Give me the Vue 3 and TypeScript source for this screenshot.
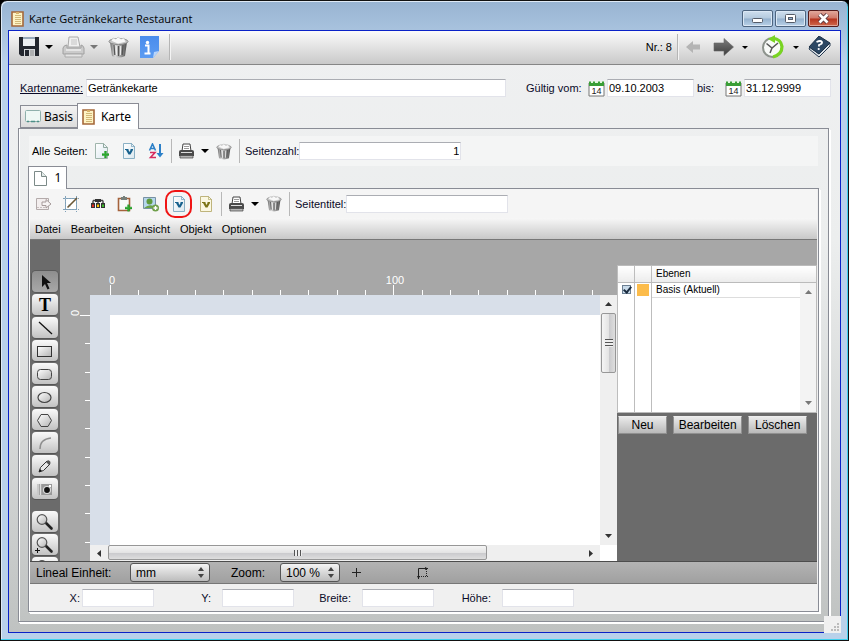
<script setup lang="ts">
import { ref } from 'vue'

const cardName = ref('Getränkekarte')
const validFrom = ref('09.10.2003')
const validTo = ref('31.12.9999')
const pageCount = ref('1')
const pageTitle = ref('')
const unit = ref('mm')
const zoom = ref('100 %')
const layerVisible = ref(true)

const menu = ['Datei', 'Bearbeiten', 'Ansicht', 'Objekt', 'Optionen']

const fields = ref([
  { id: 'pos-x', label: 'X:', value: '', tight: true },
  { id: 'pos-y', label: 'Y:', value: '', tight: false },
  { id: 'pos-w', label: 'Breite:', value: '', tight: false },
  { id: 'pos-h', label: 'Höhe:', value: '', tight: false },
])

const tools = [
  { id: 'select', label: 'Auswahl' },
  { id: 'text', label: 'Text' },
  { id: 'line', label: 'Linie' },
  { id: 'rect', label: 'Rechteck' },
  { id: 'round', label: 'Abgerundetes Rechteck' },
  { id: 'ellipse', label: 'Ellipse' },
  { id: 'polygon', label: 'Polygon' },
  { id: 'arc', label: 'Bogen' },
  { id: 'pencil', label: 'Stift' },
  { id: 'picture', label: 'Bild' },
  { id: 'zoom', label: 'Lupe' },
  { id: 'zoom-in', label: 'Vergrößern' },
  { id: 'zoom-out', label: 'Verkleinern' },
]
const activeTool = ref('select')

// Ruler marks: one every 10 mm, 17 / 6 px per mm
const marks = Array.from({ length: 60 }, (_, i) => Math.round((i * 170) / 6))
const rulerLabels = [0, 10]

const thumbX = 80
const thumbY = 28
</script>

<template>
  <div class="window">
    <svg class="defs" width="0" height="0" aria-hidden="true">
      <defs>
        <linearGradient id="gBin" x1="0" y1="0" x2="1" y2="0">
          <stop offset="0" stop-color="#6a6a6a" /><stop offset=".3" stop-color="#dadada" />
          <stop offset=".65" stop-color="#9a9a9a" /><stop offset="1" stop-color="#4a4a4a" />
        </linearGradient>
        <linearGradient id="gDark" x1="0" y1="0" x2="0" y2="1">
          <stop offset="0" stop-color="#7d7d7d" /><stop offset="1" stop-color="#3c3c3c" />
        </linearGradient>
        <linearGradient id="gInfo" x1="0" y1="0" x2="0" y2="1">
          <stop offset="0" stop-color="#4a8cec" /><stop offset="1" stop-color="#5c9cf2" />
        </linearGradient>
        <linearGradient id="gShape" x1="0" y1="0" x2="1" y2="1">
          <stop offset="0" stop-color="#fff" /><stop offset="1" stop-color="#b4b4b4" />
        </linearGradient>
        <linearGradient id="gPage" x1="0" y1="0" x2="1" y2="1">
          <stop offset="0" stop-color="#fff" /><stop offset="1" stop-color="#dbe8ef" />
        </linearGradient>
        <symbol id="bin" viewBox="0 0 21 22">
          <path d="M2 6h17l-2 14q-6.500 3-13 0z" fill="url(#gBin)" />
          <path d="M6 9l.8 10M10.500 10v10M15 9l-.8 10" stroke="#555" stroke-width="1.200" fill="none" />
          <path d="M8.300 10l.3 9M12.700 10l-.3 9" stroke="#eee" stroke-width="1" fill="none" />
          <ellipse cx="10.500" cy="5.500" rx="9.500" ry="3" fill="#c6c6c6" stroke="#858585" />
          <path d="M3 5l2-3 3 1 2-2 3 2 3-1 2 4-8 2z" fill="#f8f8f8" stroke="#bbb" stroke-width=".6" />
        </symbol>
        <symbol id="printer" viewBox="0 0 17 16">
          <path d="M4 8L5 1h7l1 7z" fill="#fff" stroke="#444" />
          <path d="M6 3.500h5M6 5.500h5" stroke="#999" />
          <path d="M1 8.500q0-1.500 2-1.500h11q2 0 2 1.500V13H1z" fill="#4a4a4a" />
          <path d="M3 9.500h11" stroke="#ddd" />
          <path d="M2 12.500h13V15H2z" fill="#b5b5b5" stroke="#444" stroke-width=".7" />
        </symbol>
        <symbol id="caret" viewBox="0 0 8 4"><path d="M0 0h8L4 4z" /></symbol>
        <symbol id="plus" viewBox="0 0 8 8">
          <path d="M3 0h2v3h3v2H5v3H3V5H0V3h3z" fill="#2fae2f" stroke="#118a1d" stroke-width=".5" />
        </symbol>
        <symbol id="notebook" viewBox="0 0 13 16">
          <path d="M1 1h11v14H1z" fill="#fdf3c4" stroke="#a5683a" stroke-width="1.600" />
          <path d="M4 4.500h6M4 6.500h6M4 8.500h6M4 10.500h6M4 12.500h6" stroke="#d2b878" />
          <path d="M5 1v2h3V1" fill="#d8b26a" />
        </symbol>
        <symbol id="variable" viewBox="0 0 16 16">
          <path d="M10.500.5v3h3" fill="none" stroke="currentColor" stroke-opacity=".4" />
          <path d="M4 6h3.500v1l1 2 1-2V6H12v1l-2.500 4.500h-2L5 7H4z" fill="currentColor" />
        </symbol>
        <symbol id="calendar" viewBox="0 0 17 17">
          <path d="M1 3h15v13H1z" fill="#fff" stroke="#777" />
          <path d="M1 1.500h15V6H1z" fill="#3a9e36" />
          <path d="M3 1h2v2H3zM7 1h3v2H7zM12 1h2v2h-2z" fill="#e4f4e0" />
        </symbol>
        <symbol id="lens" viewBox="0 0 20 18">
          <path d="M10.500 9.500l6 6" stroke="#222" stroke-width="2.600" stroke-linecap="round" />
          <circle cx="7" cy="6.500" r="4.800" fill="url(#gShape)" stroke="#555" stroke-width="1.200" />
        </symbol>
        <symbol id="updown" viewBox="0 0 6 11">
          <path d="M0 4l3-4 3 4zM0 7h6l-3 4z" fill="#444" />
        </symbol>
      </defs>
    </svg>

    <header class="titlebar">
      <svg class="app-icon" width="13" height="16"><use href="#notebook" /></svg>
      <h1>Karte Getränkekarte Restaurant</h1>
      <div class="winbtns">
        <button type="button" aria-label="Minimieren">
          <svg width="13" height="11"><rect x="1.500" y="5.500" width="10" height="4" rx="1" fill="#fff" stroke="#555c68" /></svg>
        </button>
        <button type="button" aria-label="Maximieren">
          <svg width="13" height="11"><rect x="1.500" y="1.500" width="10" height="8" rx="1" fill="#fff" stroke="#555c68" /><rect x="4.500" y="4.500" width="4" height="2" fill="#8fb0d2" stroke="#555c68" /></svg>
        </button>
        <button type="button" class="close" aria-label="Schließen">
          <svg width="13" height="11"><path d="M2.500 1.500l8 8M10.500 1.500l-8 8" stroke="#5b3a3f" stroke-width="4.500" /><path d="M2.500 1.500l8 8M10.500 1.500l-8 8" stroke="#fff" stroke-width="2.700" /></svg>
        </button>
      </div>
    </header>

    <main class="client">
      <div class="mainbar">
        <div class="split">
          <button type="button" aria-label="Speichern">
            <svg width="21" height="22" viewBox="0 0 21 22">
              <path d="M0 1h20v19H2l-2-2z" fill="#23272f" />
              <path d="M4 1h12v9H4z" fill="#eceff2" /><path d="M4 1h12v2H4z" fill="#9ab" />
              <path d="M5 13h11v7H5z" fill="#d4d7da" /><path d="M6 14h4v6H6z" fill="#23272f" />
              <path d="M12 14v6M14 14v6" stroke="#888" />
            </svg>
          </button>
          <button type="button" class="drop" aria-label="Speichern-Optionen"><svg width="8" height="4"><use href="#caret" /></svg></button>
        </div>
        <div class="split off">
          <button type="button" aria-label="Drucken">
            <svg width="23" height="22" viewBox="0 0 23 22">
              <path d="M6 11L7 1h9l2 10z" fill="#f0f0f0" stroke="#aaa" />
              <path d="M9 4h6M9 6h6M9 8h6" stroke="#c4c4c4" />
              <path d="M1 12q1-3 4-3v3h14V9q2 0 3 3v6H1z" fill="#cbcbcb" stroke="#a0a0a0" />
              <path d="M4 14h15" stroke="#fff" /><path d="M3 18h17v3H3z" fill="#e4e4e4" stroke="#aaa" />
            </svg>
          </button>
          <button type="button" class="drop" aria-label="Druckoptionen"><svg width="8" height="4"><use href="#caret" /></svg></button>
        </div>
        <button type="button" class="wide" aria-label="Löschen"><svg width="21" height="22"><use href="#bin" /></svg></button>
        <button type="button" aria-label="Information">
          <svg width="21" height="22" viewBox="0 0 21 22">
            <path d="M1 0h19v15l-6 7H1z" fill="url(#gInfo)" />
            <path d="M14 22l1-6 5-1z" fill="#b9d5fa" />
            <circle cx="8.500" cy="6.500" r="1.700" fill="#fff" />
            <path d="M6 9.500h3.500V17M5.500 17.500h6" stroke="#fff" stroke-width="2" fill="none" />
          </svg>
        </button>
        <span class="rule"></span>
        <span class="number">Nr.: 8</span>
        <span class="rule"></span>
        <button type="button" class="prev" aria-label="Zurück">
          <svg width="15" height="14" viewBox="0 0 15 14"><path d="M0 7l7-6v3.500h7v5H7V13z" fill="#b4b4b4" /></svg>
        </button>
        <div class="split">
          <button type="button" aria-label="Weiter">
            <svg width="21" height="18" viewBox="0 0 21 18"><path d="M1 5h10V.5L20.500 9 11 17.500V13H1z" fill="url(#gDark)" stroke="#666" stroke-width=".6" /></svg>
          </button>
          <button type="button" class="drop right" aria-label="Weitere"><svg width="6" height="3"><use href="#caret" /></svg></button>
        </div>
        <div class="split">
          <button type="button" aria-label="Verlauf">
            <svg width="24" height="24" viewBox="0 0 24 24">
              <circle cx="11.500" cy="12.500" r="9.500" fill="#f8faf8" stroke="#8d938d" stroke-width="2" />
              <path d="M12 3.500q8 .5 9 8 0 8-9 10.500" fill="none" stroke="#79d422" stroke-width="3.200" />
              <path d="M14 0v8L7 4z" fill="#79d422" />
              <path d="M5.500 8.500l5.500 4.500 6-5M11 13l-2 5" stroke="#555" stroke-width="1.500" fill="none" />
            </svg>
          </button>
          <button type="button" class="drop right" aria-label="Verlaufsliste"><svg width="6" height="3"><use href="#caret" /></svg></button>
        </div>
        <button type="button" class="help" aria-label="Hilfe">
          <svg width="23" height="22" viewBox="0 0 23 22">
            <path d="M1 13l10 8 11-11v-3L11 18 2 11z" fill="#dfe5ea" stroke="#24384f" />
            <path d="M1 11L11 0l11 7-11 11z" fill="#2c4763" stroke="#1d3147" />
            <path d="M8.500 6q4-2 5.500 0 .5 2-3 3v1.500" stroke="#fff" stroke-width="1.800" fill="none" />
            <circle cx="10.700" cy="13" r="1.100" fill="#fff" />
          </svg>
        </button>
      </div>

      <div class="cardrow">
        <label class="name" for="card-name">Kartenname:</label>
        <input id="card-name" v-model="cardName" class="grow" type="text" />
        <label class="from" for="valid-from">Gültig vom:</label>
        <button type="button" class="cal" aria-label="Kalender: gültig vom">
          <svg width="17" height="17"><use href="#calendar" /><text x="8.500" y="14" text-anchor="middle">14</text></svg>
        </button>
        <input id="valid-from" v-model="validFrom" class="date" type="text" />
        <label class="to" for="valid-to">bis:</label>
        <button type="button" class="cal" aria-label="Kalender: gültig bis">
          <svg width="17" height="17"><use href="#calendar" /><text x="8.500" y="14" text-anchor="middle">14</text></svg>
        </button>
        <input id="valid-to" v-model="validTo" class="date" type="text" />
      </div>

      <nav class="tabs">
        <button type="button" class="tab">
          <svg width="17" height="15" viewBox="0 0 17 15">
            <rect x=".5" y="1.500" width="15" height="11" rx="1" fill="#eef8f5" stroke="#8fb0ac" />
            <path d="M2 12.500h2M6 12.500h4M12 12.500h2" stroke="#4d8f88" stroke-width="1.500" />
          </svg>
          Basis
        </button>
        <button type="button" class="tab current">
          <svg width="13" height="16"><use href="#notebook" /></svg>
          Karte
        </button>
      </nav>

      <section class="panel outer">
        <div class="bar">
          <span class="caption">Alle Seiten:</span>
          <button type="button" class="ico" aria-label="Neue Seite">
            <svg width="16" height="16" viewBox="0 0 16 16"><path d="M1.500.5h8l4 4v11h-12z" fill="url(#gPage)" stroke="#9fb5ac" /><path d="M9.500.5v4h4" fill="none" stroke="#8fa99f" /><use href="#plus" x="8" y="8" width="7" height="7" /></svg>
          </button>
          <button type="button" class="ico blue" aria-label="Variable">
            <svg width="16" height="16" viewBox="0 0 16 16"><path d="M2.500.5h8l3 3v12h-11z" fill="url(#gPage)" stroke="#8ab0c4" /><use href="#variable" /></svg>
          </button>
          <button type="button" class="ico" aria-label="Sortieren">
            <svg width="16" height="16" viewBox="0 0 16 16"><path d="M1.500 7.500L4.500 1l3 6.500M2.500 5.500h4" stroke="#2c80c8" stroke-width="1.600" fill="none" /><path d="M2 9.500h5L2.500 14.500H8" stroke="#d62c5e" stroke-width="1.600" fill="none" /><path d="M12 1v10" stroke="#2c80c8" stroke-width="2" /><path d="M8.500 10h7L12 14.500z" fill="#2c80c8" /></svg>
          </button>
          <span class="sep"></span>
          <button type="button" class="ico" aria-label="Alle drucken"><svg width="17" height="16"><use href="#printer" /></svg></button>
          <button type="button" class="mini" aria-label="Druckoptionen"><svg width="8" height="4"><use href="#caret" /></svg></button>
          <button type="button" class="ico" aria-label="Alle löschen"><svg width="16" height="17"><use href="#bin" /></svg></button>
          <span class="sep"></span>
          <label class="lbl" for="page-count">Seitenzahl:</label>
          <input id="page-count" v-model="pageCount" class="mid num" type="text" />
        </div>

        <button type="button" class="pagetab">
          <svg width="13" height="15" viewBox="0 0 13 15"><path d="M.5.5h7l5 5v9H.5z" fill="#fff" stroke="#7c8a88" /><path d="M7.500.5v5h5" fill="#e3ebe9" stroke="#7c8a88" /></svg>
          1
        </button>

        <div class="panel inner">
          <div class="bar second">
            <button type="button" class="ico" aria-label="Exportieren">
              <svg width="17" height="16" viewBox="0 0 17 16"><path d="M1.500 2.500h12v11h-12z" fill="#f3eeee" stroke="#b3aaaa" /><path d="M2 11h2v1H2zM5 11h2v1H5zM8 11h2v1H8z" fill="#c8bfbf" /><path d="M7 6h4V3.500L16 8l-5 4V9.500H7z" fill="#f7f3f3" stroke="#a69a9a" /></svg>
            </button>
            <button type="button" class="ico" aria-label="Bereich bearbeiten">
              <svg width="16" height="16" viewBox="0 0 16 16"><path d="M2.500 2.500h11v11h-11z" fill="#fff" stroke="#8aa8bf" /><path d="M5 8h3v3H5z" fill="#dfeaf2" /><path d="M0 2.500h16M0 13.500h16M2.500 0v16M13.500 0v16" stroke="#7fa0b8" stroke-dasharray="2 1" /><path d="M4.500 11.500L14 2" stroke="#6b5836" stroke-width="1.600" /></svg>
            </button>
            <button type="button" class="ico" aria-label="Struktur">
              <svg width="16" height="16" viewBox="0 0 16 16"><path d="M3 4.500h10M3 4.500V8M8 4.500V8M13 4.500V8" stroke="#444" stroke-width="1.400" fill="none" /><path d="M5 3h6v3H5z" fill="#333" /><path d="M1 7h4v5H1zM6 7h4v5H6zM11 7h4v5h-4z" fill="#333" /><path d="M2 8.500h2v2.500H2z" fill="#e02a20" /><path d="M7 8.500h2v2.500H7z" fill="#ffc400" /><path d="M12 8.500h2v2.500h-2z" fill="#3dbb2a" /></svg>
            </button>
            <button type="button" class="ico" aria-label="Einfügen">
              <svg width="16" height="16" viewBox="0 0 16 16"><path d="M1.500 2.500h11v12h-11z" fill="#f8faf8" stroke="#a5633d" stroke-width="1.600" /><path d="M4 1h6v3H4z" fill="#77807a" /><path d="M6 0h2v2H6z" fill="#77807a" /><use href="#plus" x="8" y="8.500" width="7" height="7" /></svg>
            </button>
            <button type="button" class="ico" aria-label="Bild hinzufügen">
              <svg width="17" height="16" viewBox="0 0 17 16"><path d="M.5 1.500h12v11H.5z" fill="#b5d6ec" stroke="#7791a3" /><circle cx="6.500" cy="5.500" r="3" fill="#5e9a3d" /><path d="M1 12q6-5 11-1v1z" fill="#6aa347" /><circle cx="12.500" cy="12" r="3.500" fill="#6f9f4a" /><path d="M12.500 10v4M10.500 12h4" stroke="#fff" stroke-width="1.400" /></svg>
            </button>
            <button type="button" class="ico blue marked" aria-label="Variable">
              <svg width="16" height="16" viewBox="0 0 16 16"><path d="M2.500.5h8l3 3v12h-11z" fill="url(#gPage)" stroke="#8ab0c4" /><use href="#variable" /></svg>
            </button>
            <button type="button" class="ico olive" aria-label="Artikelvariable">
              <svg width="16" height="16" viewBox="0 0 16 16"><path d="M2.500.5h8l3 3v12h-11z" fill="#fbf8e2" stroke="#bfb47c" /><use href="#variable" /></svg>
            </button>
            <span class="sep"></span>
            <button type="button" class="ico" aria-label="Seite drucken"><svg width="17" height="16"><use href="#printer" /></svg></button>
            <button type="button" class="mini" aria-label="Druckoptionen"><svg width="8" height="4"><use href="#caret" /></svg></button>
            <button type="button" class="ico" aria-label="Seite löschen"><svg width="16" height="17"><use href="#bin" /></svg></button>
            <span class="sep"></span>
            <label class="lbl" for="page-title">Seitentitel:</label>
            <input id="page-title" v-model="pageTitle" class="mid" type="text" />
          </div>

          <div class="designer">
            <nav class="menu">
              <button v-for="m in menu" :key="m" type="button">{{ m }}</button>
            </nav>

            <div class="editor">
              <div class="tools">
                <button
                  v-for="t in tools"
                  :key="t.id"
                  type="button"
                  class="tool"
                  :class="{ active: t.id === activeTool, spaced: t.id === 'zoom' }"
                  :aria-label="t.label"
                  @click="activeTool = t.id"
                >
                  <span v-if="t.id === 'text'" class="glyph">T</span>
                  <svg v-else width="20" height="18" viewBox="0 0 20 18">
                    <path v-if="t.id === 'select'" d="M7 2v12l3-3 2.500 5.500 2-1L12 10h4z" fill="#111" />
                    <path v-if="t.id === 'line'" d="M4 3l13 12" stroke="#111" stroke-width="1.300" />
                    <rect v-if="t.id === 'rect'" x="2.500" y="4.500" width="14" height="10" fill="url(#gShape)" stroke="#333" />
                    <rect v-if="t.id === 'round'" x="2.500" y="4.500" width="14" height="10" rx="3" fill="url(#gShape)" stroke="#444" />
                    <ellipse v-if="t.id === 'ellipse'" cx="9.500" cy="9.500" rx="6.500" ry="5" fill="url(#gShape)" stroke="#444" stroke-width="1.200" />
                    <path v-if="t.id === 'polygon'" d="M6 3.500h7l3.500 6-3.500 6H6l-3.500-6z" fill="url(#gShape)" stroke="#444" />
                    <path v-if="t.id === 'arc'" d="M5 15Q5 5 16 4" fill="none" stroke="#8e8e8e" stroke-width="1.500" />
                    <g v-if="t.id === 'pencil'">
                      <path d="M4 15l1.500-4.500L12 4l3 3-6.500 6.500z" fill="#e8e8e8" stroke="#333" />
                      <path d="M11 5l3 3 1.500-1.500q.5-2-1.500-3-1-.5-1.500 0z" fill="#555" /><path d="M4 15l3-1-2-2z" fill="#111" />
                    </g>
                    <g v-if="t.id === 'picture'">
                      <path d="M2 4h15v11H2z" fill="#999" /><path d="M3 4v11M5.500 4v11" stroke="#ddd" stroke-width="1.400" />
                      <circle cx="12" cy="10" r="4" fill="#ddd" /><circle cx="12" cy="10" r="2.900" fill="#111" /><path d="M14 5h2v2h-2z" fill="#fff" />
                    </g>
                    <use v-if="t.id.startsWith('zoom')" href="#lens" />
                    <path v-if="t.id === 'zoom-in'" d="M0 14.500h5M2.500 12v5" stroke="#111" />
                  </svg>
                </button>
              </div>

              <div class="stage">
                <svg class="ruler-top" height="55" aria-hidden="true">
                  <rect v-for="(m, i) in marks" :key="i" :x="50 + m" :y="i % 10 === 0 ? 45 : 50" width="1" :height="i % 10 === 0 ? 10 : 5" fill="#fff" />
                  <text v-for="n in rulerLabels" :key="n" :x="52 + marks[n]" y="44" text-anchor="middle">{{ n * 10 }}</text>
                </svg>
                <svg class="ruler-left" width="30" aria-hidden="true">
                  <rect v-for="(m, i) in marks" :key="i" :x="i % 10 === 0 ? 20 : 25" :y="20 + m" :width="i % 10 === 0 ? 10 : 5" height="1" fill="#fff" />
                  <text x="19" y="21" transform="rotate(-90 19 21)">0</text>
                </svg>
                <div class="view">
                  <div class="desk"><div class="paper"></div></div>
                  <div class="scroll vert">
                    <button type="button" class="arrow" aria-label="Nach oben"><svg width="7" height="4"><path d="M0 4l3.500-4L7 4z" fill="#333" /></svg></button>
                    <div class="track"><div class="thumb" :style="{ height: thumbY + '%' }"><i></i></div></div>
                    <button type="button" class="arrow" aria-label="Nach unten"><svg width="7" height="4"><path d="M0 0h7L3.500 4z" fill="#333" /></svg></button>
                  </div>
                  <div class="scroll horz">
                    <button type="button" class="arrow" aria-label="Nach links"><svg width="4" height="7"><path d="M4 0v7L0 3.500z" fill="#333" /></svg></button>
                    <div class="track"><div class="thumb" :style="{ width: thumbX + '%' }"><i></i></div></div>
                    <button type="button" class="arrow" aria-label="Nach rechts"><svg width="4" height="7"><path d="M0 0v7l4-3.500z" fill="#333" /></svg></button>
                  </div>
                </div>
              </div>

              <aside class="layers">
                <div class="layerbox">
                  <table>
                    <thead>
                      <tr><th class="c1"></th><th class="c1"></th><th>Ebenen</th></tr>
                    </thead>
                    <tbody>
                      <tr class="row">
                        <td><input v-model="layerVisible" type="checkbox" aria-label="Basis sichtbar" /></td>
                        <td><span class="swatch"></span></td>
                        <td class="label">Basis (Aktuell)</td>
                      </tr>
                      <tr class="rest"><td></td><td></td><td></td></tr>
                    </tbody>
                  </table>
                  <div class="sidebar">
                    <svg width="7" height="4"><path d="M0 4l3.500-4L7 4z" fill="#777" /></svg>
                    <svg width="7" height="4"><path d="M0 0h7L3.500 4z" fill="#777" /></svg>
                  </div>
                </div>
                <div class="layerbtns">
                  <button type="button" class="new">Neu</button>
                  <button type="button" class="edit">Bearbeiten</button>
                  <button type="button" class="del">Löschen</button>
                </div>
              </aside>
            </div>

            <div class="status">
              <label class="unit-label" for="unit">Lineal Einheit:</label>
              <span class="pick wide-pick">
                <select id="unit" v-model="unit"><option>mm</option><option>cm</option></select>
                <svg width="6" height="11"><use href="#updown" /></svg>
              </span>
              <label class="zoom-label" for="zoom">Zoom:</label>
              <span class="pick">
                <select id="zoom" v-model="zoom"><option>100 %</option><option>200 %</option></select>
                <svg width="6" height="11"><use href="#updown" /></svg>
              </span>
              <svg class="cross" width="11" height="11"><path d="M5.500 1v9M1 5.500h9" stroke="#222" /></svg>
              <svg class="size" width="12" height="12" viewBox="0 0 12 12">
                <path d="M2.500 12V1.500H12" stroke="#222" fill="none" /><path d="M10.500 2v8M3 9.500h9" stroke="#222" stroke-dasharray="1 1" />
                <path d="M9 0l3 1.500L9 3zM1 9l1.500 3L4 9z" fill="#222" />
              </svg>
            </div>
          </div>

          <div class="coords">
            <div v-for="f in fields" :key="f.id" class="coord" :class="{ tight: f.tight }">
              <label :for="f.id">{{ f.label }}</label>
              <input :id="f.id" v-model="f.value" type="text" />
            </div>
          </div>
        </div>
      </section>

      <svg class="grip" width="17" height="17" aria-hidden="true">
        <path d="M13 7h2v2h-2zM10 10h2v2h-2zM13 10h2v2h-2zM7 13h2v2H7zM10 13h2v2h-2zM13 13h2v2h-2z" fill="#bbb" />
      </svg>
    </main>
  </div>
</template>

<style>
html,
body,
#app {
  height: 100%;
  margin: 0;
}
body {
  background: #000;
}
</style>

<style scoped>
* {
  box-sizing: border-box;
}
.window {
  display: flex;
  flex-direction: column;
  height: 100%;
  padding: 0 7px 7px;
  border: 1px solid #111;
  border-radius: 7px 7px 0 0;
  background: linear-gradient(#98b4d2 0, #b9d1ea 60px, #b9d1ea 100%);
  box-shadow: inset -1px -1px 0 #3fd0ee, inset 1px 1px 0 #dfeaf6;
  font: 11px/14px 'Liberation Sans', Arial, sans-serif;
  color: #000;
}
.defs {
  position: absolute;
}
svg {
  display: block;
  flex: none;
}
button {
  display: flex;
  align-items: center;
  justify-content: center;
  margin: 0;
  padding: 0;
  border: 0;
  background: none;
  font: inherit;
  color: inherit;
}
input[type='text'] {
  height: 18px;
  min-width: 0;
  margin: 0;
  padding: 0 1px;
  border: 1px solid #e2e3ea;
  border-top-color: #abadb3;
  background: #fff;
  font: inherit;
  color: inherit;
}
label {
  white-space: nowrap;
  color: #0a0a28;
}

.titlebar {
  display: flex;
  flex: none;
  align-items: center;
  height: 29px;
  padding: 6px 2px 0 3px;
}
.titlebar h1 {
  flex: 1;
  margin: 0 0 0 5px;
  font: 11px/16px 'Open Sans', 'Noto Sans', sans-serif;
}
.winbtns {
  display: flex;
  gap: 2px;
}
.winbtns button {
  width: 31px;
  height: 17px;
  border: 1px solid #4d6580;
  border-radius: 2px;
  background: linear-gradient(#cfdfee 0, #b4cade 48%, #93b0cd 52%, #b9d2e8 100%);
  box-shadow: inset 0 0 0 1px #dbe8f5;
}
.winbtns .close {
  border-color: #541c1c;
  background: linear-gradient(#e1a89c 0, #d07868 48%, #b5331d 52%, #d0694c 100%);
  box-shadow: inset 0 0 0 1px #e0a698;
}

.client {
  position: relative;
  display: flex;
  flex: 1;
  flex-direction: column;
  min-height: 0;
  border: 1px solid #0a22c8;
  background: linear-gradient(#eff0f1 0, #eceeee 35%, #bfc2c1 100%);
}
.mainbar {
  display: flex;
  flex: none;
  align-items: center;
  gap: 9px;
  height: 34px;
  padding: 0 9px 1px 10px;
  border-bottom: 1px solid #868686;
  background: linear-gradient(#fbfbfb, #c9c9c9);
}
.split {
  display: flex;
  align-items: center;
  gap: 4px;
}
.drop {
  width: 9px;
  height: 22px;
}
.drop.right {
  width: 14px;
}
.off {
  fill: #777;
}
.wide {
  width: 23px;
}
.rule {
  width: 2px;
  height: 26px;
  border-left: 1px solid #b5b5b5;
  background: #f4f4f4;
}
.number {
  margin-right: -4px;
  margin-left: auto;
}
.prev {
  width: 17px;
  margin-right: 2px;
  margin-left: -3px;
}
.help {
  margin-left: -4px;
}

.cardrow {
  display: flex;
  flex: none;
  align-items: center;
  padding: 14px 9px 6px 11px;
}
.name {
  width: 66px;
  text-decoration: underline;
}
.grow {
  flex: 1;
}
.from {
  width: 82px;
  padding-left: 20px;
}
.cal {
  margin-right: 2px;
}
.cal text {
  font: 9px 'Liberation Sans', sans-serif;
  fill: #222;
}
.date {
  width: 87px;
}
.to {
  width: 31px;
  padding-left: 3px;
}

.tabs {
  display: flex;
  flex: none;
  align-items: flex-end;
  position: relative;
  z-index: 1;
  height: 26px;
  margin: 0 0 -1px 11px;
}
.tab {
  gap: 2px;
  height: 23px;
  width: 57px;
  margin-bottom: 1px;
  border: 1px solid #8a8c95;
  border-right: 0;
  background: linear-gradient(#f3f3f3, #dcdcdc);
  font: 12px/16px 'Noto Sans', sans-serif;
}
.tab.current {
  gap: 6px;
  width: 62px;
  height: 26px;
  margin: 0;
  padding-right: 3px;
  border-right: 1px solid #8a8c95;
  border-bottom: 0;
  background: #fff;
}

.panel {
  display: flex;
  flex: 1;
  flex-direction: column;
  min-height: 0;
  border: 1px solid #898c95;
  box-shadow: 1px 1px 0 #fff, 2px 2px 0 #fff, inset 1px 0 0 #fff;
}
.outer {
  margin: 0 11px 10px 9px;
  padding: 7px 9px 9px;
}
.inner {
  background: #f0f0f0;
}
.bar {
  display: flex;
  flex: none;
  align-items: center;
  height: 30px;
  margin: 0 1px;
  background: #f4f5f5;
}
.second {
  height: 29px;
  background: #f5f5f5;
}
.caption {
  width: 59px;
  padding-left: 3px;
  white-space: nowrap;
}
.ico {
  flex: none;
  width: 27px;
  height: 28px;
}
.blue {
  color: #17618d;
}
.olive {
  color: #7d7518;
}
.marked {
  border: 2px solid #f01414;
  border-radius: 10px;
}
.mini {
  width: 10px;
  height: 24px;
}
.sep {
  width: 1px;
  height: 24px;
  margin: 0 1px 0 2px;
  background: #b8b8b8;
}
.lbl {
  padding-left: 4px;
}
.mid {
  width: 162px;
}
.num {
  text-align: right;
}
.pagetab {
  position: relative;
  z-index: 1;
  flex: none;
  gap: 8px;
  width: 39px;
  height: 23px;
  margin-bottom: -1px;
  border: 1px solid #898c95;
  border-bottom: 0;
  background: #fff;
  font: 12px/16px 'Noto Sans', sans-serif;
}

.designer {
  display: flex;
  flex: 1;
  flex-direction: column;
  min-height: 0;
  margin: 0 1px;
}
.menu {
  display: flex;
  flex: none;
  align-items: center;
  gap: 10px;
  height: 22px;
  padding-left: 5px;
  border-bottom: 1px solid #777;
  background: linear-gradient(#f7f7f7, #c8c8c8);
}
.editor {
  display: grid;
  flex: 1;
  grid-template-columns: 30px minmax(0, 1fr) 200px;
  grid-template-rows: minmax(0, 1fr);
  min-height: 0;
}
.tools {
  display: flex;
  flex-direction: column;
  gap: 2px;
  padding: 31px 2px 0;
  overflow: hidden;
  background: #6b6b6b;
}
.tool {
  flex: none;
  height: 21px;
  border-radius: 4px;
  background: linear-gradient(#fafafa, #c2c2c2);
  box-shadow: 0 1px 0 #555;
}
.tool.active {
  background: linear-gradient(#8e8e8e, #a8a8a8);
  box-shadow: 0 0 0 1px #5a5a5a;
}
.tool.spaced {
  margin-top: 10px;
}
.glyph {
  font: bold 18px/20px 'Liberation Serif', serif;
}

.stage {
  display: grid;
  grid-template-columns: 30px minmax(0, 1fr);
  grid-template-rows: 55px minmax(0, 1fr);
  background: #a7a7a7;
}
.ruler-top {
  grid-column: 1 / 3;
  width: 100%;
}
.ruler-left {
  height: 100%;
  overflow: hidden;
}
.stage text {
  font: 11px 'Liberation Sans', sans-serif;
  fill: #fff;
}
.view {
  display: grid;
  grid-template-columns: minmax(0, 1fr) 17px;
  grid-template-rows: minmax(0, 1fr) 16px;
  background: #fff;
}
.desk {
  padding: 20px 0 0 20px;
  background: #d8dfe9;
}
.paper {
  height: 100%;
  background: #fff;
}
.scroll {
  display: flex;
  background: #efefef;
}
.vert {
  flex-direction: column;
  padding: 0 1px;
}
.track {
  flex: 1;
}
.arrow {
  width: 18px;
  flex: none;
}
.vert .arrow {
  width: 15px;
  height: 18px;
}
.thumb {
  display: flex;
  align-items: center;
  justify-content: center;
  border: 1px solid #979797;
  border-radius: 2px;
}
.vert .thumb {
  background: linear-gradient(90deg, #f5f5f5, #e4e4e4 50%, #c9c9cc 52%, #dedede);
}
.horz .thumb {
  height: 15px;
  background: linear-gradient(#f5f5f5, #e4e4e4 50%, #c9c9cc 52%, #dedede);
}
.thumb i {
  width: 8px;
  height: 8px;
  background: repeating-linear-gradient(#555 0, #555 1px, #eee 1px, #eee 3px);
}
.horz .thumb i {
  height: 6px;
  background: repeating-linear-gradient(90deg, #555 0, #555 1px, #eee 1px, #eee 3px);
}

.layers {
  background: linear-gradient(#a7a7a7 0, #a7a7a7 25px, #6b6b6b 25px, #6b6b6b 100%);
  padding-top: 25px;
}
.layerbox {
  position: relative;
  height: 148px;
  border: 1px solid #bbb;
  border-width: 1px 1px 1px 0;
  background: #fff;
}
table {
  width: 100%;
  height: 100%;
  border-collapse: collapse;
  table-layout: fixed;
  font: 10px/12px 'Liberation Sans', Arial, sans-serif;
}
th,
td {
  padding: 0;
  border-right: 1px solid #bdbdbd;
  border-left: 1px solid #bdbdbd;
}
th {
  height: 16px;
  border-bottom: 1px solid #bbb;
  background: linear-gradient(#fff, #ececec);
  font-weight: normal;
  text-align: left;
}
th:last-child,
td:last-child {
  padding-left: 4px;
  border-right: 0;
}
.c1 {
  width: 17px;
}
.row td {
  height: 15px;
}
.row .label {
  border-bottom: 1px solid #ddd;
}
.row input {
  display: block;
  appearance: none;
  width: 9px;
  height: 9px;
  margin: 0 auto;
  border: 1px solid #6c7f92;
  background: #c9dbea;
}
.row input:checked::after {
  content: '';
  display: block;
  width: 3px;
  height: 6px;
  margin: -1px 0 0 2px;
  border: solid #1c2d40;
  border-width: 0 2px 2px 0;
  transform: rotate(40deg);
}
.swatch {
  display: block;
  width: 12px;
  height: 12px;
  margin: 0 auto;
  background: #fcbc4b;
}
.sidebar {
  position: absolute;
  top: 17px;
  right: 0;
  bottom: 0;
  display: flex;
  flex-direction: column;
  align-items: center;
  justify-content: space-between;
  width: 16px;
  padding: 7px 0;
  background: #f3f3f3;
}
.layerbtns {
  display: flex;
  gap: 6px;
  padding: 3px 10px 0 1px;
}
.layerbtns button {
  height: 18px;
  border: 1px solid #909090;
  border-top-color: #eee;
  background: linear-gradient(#eaeaea, #b9b9b9);
  font-size: 12px;
}
.new {
  flex: 49;
}
.edit {
  flex: 70;
}
.del {
  flex: 59;
}

.status {
  display: flex;
  flex: none;
  align-items: center;
  height: 23px;
  padding-left: 6px;
  border-top: 1px solid #4c4c4c;
  border-bottom: 1px solid #777;
  background: linear-gradient(#b3b3b3, #a0a0a0);
  font-size: 12px;
}
.status label {
  color: #000;
}
.unit-label {
  width: 94px;
}
.zoom-label {
  width: 70px;
  padding-left: 21px;
}
.pick {
  position: relative;
  width: 60px;
}
.wide-pick {
  width: 80px;
}
.pick select {
  display: block;
  appearance: none;
  width: 100%;
  height: 19px;
  margin: 0;
  padding: 0 5px;
  border: 1px solid #555;
  border-radius: 3px;
  background: linear-gradient(#f4f4f4, #bcbcbc);
  font: inherit;
  color: #000;
}
.pick svg {
  position: absolute;
  top: 4px;
  right: 6px;
  pointer-events: none;
}
.cross {
  margin-left: 11px;
}
.size {
  margin-left: 54px;
}

.coords {
  display: flex;
  flex: none;
  height: 27px;
  align-items: center;
  padding-left: 1px;
}
.coord {
  display: flex;
  align-items: center;
  justify-content: flex-end;
  gap: 11px;
  width: 140px;
}
.coord:first-child {
  width: 124px;
}
.coord.tight {
  gap: 2px;
}
.coord input {
  width: 72px;
}

.grip {
  position: absolute;
  right: -1px;
  bottom: -1px;
  background: #f0f0f0;
}
</style>
